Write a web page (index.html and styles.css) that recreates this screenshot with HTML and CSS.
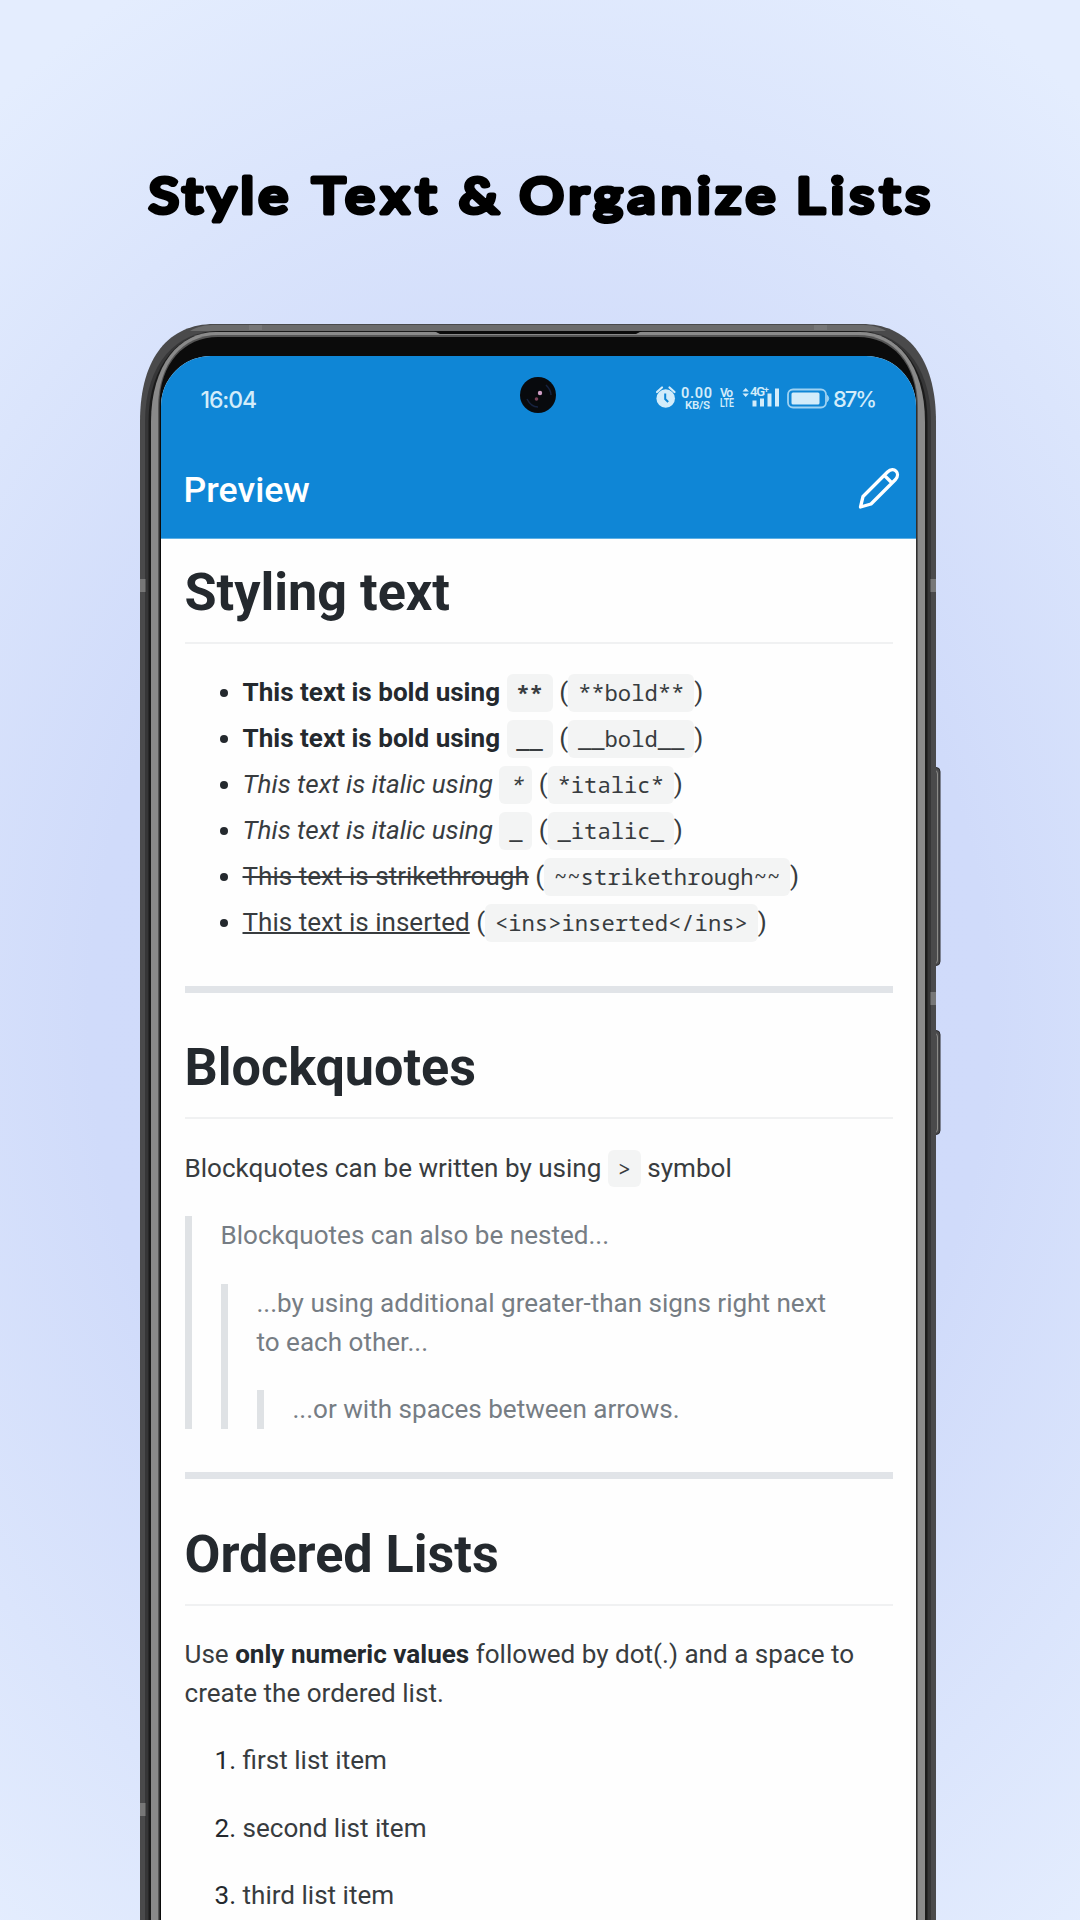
FILE: index.html
```html
<!DOCTYPE html>
<html lang="en">
<head>
<meta charset="utf-8">
<title>Style Text &amp; Organize Lists</title>
<link rel="stylesheet" href="styles.css">
</head>
<body>
<main class="poster">
  <svg class="headline" viewBox="0 0 1080 100" role="heading" aria-level="1">
    <g transform="scale(1.12 1)">
      <text x="133" y="61.500" textLength="124">Style</text>
      <text x="279" y="61.500" textLength="110">Text</text>
      <text x="410" y="61.500" textLength="34">&amp;</text>
      <text x="464" y="61.500" textLength="228">Organize</text>
      <text x="711" y="61.500" textLength="119">Lists</text>
    </g>
  </svg>

  <section class="phone">
    <svg class="frame" viewBox="0 0 808 1600" aria-hidden="true">
      <g fill="#4b4b4d" stroke="#2c2c2d">
        <rect x="788" y="443.500" width="12" height="198" rx="4"/>
        <rect x="788" y="706.500" width="12" height="104" rx="4"/>
      </g>
      <path fill="none" stroke="#8b8b88" d="M795 446q2.500 1 2.500 4v186q0 3-2.500 4M795 709q2.500 1 2.500 4v92q0 3-2.500 4"/>
      <path fill="#4a4a4b" d="M0 1600V98C0 32 30 0 74 0H722C766 0 796 32 796 98V1600Z"/>
      <path fill="#6b6b6b" d="M50 7C58 2 65 1 76 1H720C731 1 738 2 746 7Z"/>
      <path fill="#363637" d="M5 1600V98C5 38 38 7 78 7H718C758 7 791 38 791 98V1600Z"/>
      <path fill="#1b1b1b" d="M8.500 1600V98C8.500 40 40 7 80 7H716C756 7 787.500 40 787.500 98V1600Z"/>
      <path fill="#8a8a8a" d="M11 1600V98C11 40 40 8 76 8H720C756 8 785 40 785 98V1600Z"/>
      <path fill="#555" d="M18 1600V84C18 40 42 11 78 11H718C754 11 778 40 778 84V1600Z"/>
      <path fill="#0b0b0b" d="M19.500 1600V80C19.500 40 44 13 78 13H718C752 13 776.500 40 776.500 80V1600Z"/>
      <path fill="#0b0b0b" d="M294 7H502L496 10H300Z"/>
      <g fill="#777">
        <rect x="109" y="1" width="13" height="5"/><rect x="674" y="1" width="13" height="5"/>
        <rect x="0" y="255" width="5.500" height="13"/><rect x="790.500" y="255" width="5.500" height="13"/>
        <rect x="790.500" y="668" width="5.500" height="13"/><rect x="0" y="1479" width="5.500" height="13"/>
      </g>
    </svg>

    <div class="screen">
      <header class="appbar">
        <div class="status">
          <span class="clock">16:04</span>
          <svg class="indicators" viewBox="0 0 224 34">
            <g fill="none" stroke="#d3ecfa" stroke-width="2.200" stroke-linecap="round">
              <path d="M2 9l5-4.500M14.500 4.500l5 4.500"/>
            </g>
            <circle cx="10.700" cy="15.500" r="9.300" fill="#d3ecfa"/>
            <path d="M10.200 10.500v5.500l3 3" fill="none" stroke="#0f86d6" stroke-width="2"/>
            <g class="tiny">
              <text x="26" y="14.500" font-size="14.500" textLength="31">0.00</text>
              <text x="30" y="26.300" font-size="11.500" textLength="25">KB/S</text>
              <text x="65" y="13.500" font-size="12" textLength="13">Vo</text>
              <text x="65" y="24" font-size="12" textLength="14" lengthAdjust="spacingAndGlyphs">LTE</text>
              <text x="95" y="13" font-size="13" textLength="19">4G⁺</text>
            </g>
            <path d="M87.500 8.500l3.200-3.500L93.900 8.500zM87.500 10.500l3.200 3.500 3.200-3.500zM97.500 17.500h4v6h-4zM105 15.500h4v8h-4zM112.500 10.500h4v13h-4zM120 5.500h4v18h-4z" fill="#d3ecfa"/>
            <rect x="133" y="6.500" width="38" height="18" rx="5" fill="none" stroke="#9fd2f2" stroke-width="1.800"/>
            <rect x="136.500" y="9.500" width="28" height="12" rx="1.500" fill="#d3ecfa"/>
            <path d="M172.500 12.500q2.500 3 0 6z" fill="#9fd2f2" stroke="#9fd2f2"/>
            <text class="percent" x="178" y="23.500" textLength="44">87%</text>
          </svg>
        </div>
        <svg class="camera" viewBox="0 0 36 36">
          <circle cx="18" cy="18" r="18" fill="#080a0d"/>
          <path d="M7 22q4 8 11 8M26 8q5 5 5 10" fill="none" stroke="#17233f" stroke-width="1.500"/>
          <circle cx="20" cy="16" r="2.200" fill="#cf9fc4"/><circle cx="16.500" cy="22" r="1.800" fill="#7c4259"/>
        </svg>
        <div class="toolbar">
          <span class="title">Preview</span>
          <svg class="pencil" viewBox="0 0 42 42">
            <path d="M2.500 38L5 27.500 29.500 3C36-3 43 4 37.500 10.500L13 35ZM26.500 6.500l7.500 7.500" fill="none" stroke="#fff" stroke-width="3.300" stroke-linejoin="round"/>
          </svg>
        </div>
      </header>

      <article class="markdown">
        <h1>Styling text</h1>
        <ul>
          <li><strong>This text is bold using <code>**</code></strong> (<code>**bold**</code>)</li>
          <li><strong>This text is bold using <code class="light">__</code></strong> (<code>__bold__</code>)</li>
          <li><em>This text is italic using <code>*</code></em> (<code>*italic*</code>)</li>
          <li><em>This text is italic using <code class="upright">_</code></em> (<code>_italic_</code>)</li>
          <li><del>This text is strikethrough</del> (<code>~~strikethrough~~</code>)</li>
          <li><ins>This text is inserted</ins> (<code>&lt;ins&gt;inserted&lt;/ins&gt;</code>)</li>
        </ul>
        <hr>
        <h1>Blockquotes</h1>
        <p>Blockquotes can be written by using <code>&gt;</code> symbol</p>
        <blockquote>
          <p>Blockquotes can also be nested...</p>
          <blockquote>
            <p>...by using additional greater-than signs right next to each other...</p>
            <blockquote><p>...or with spaces between arrows.</p></blockquote>
          </blockquote>
        </blockquote>
        <hr>
        <h1>Ordered Lists</h1>
        <p>Use <strong>only numeric values</strong> followed by dot(.) and a space to create the ordered list.</p>
        <ol>
          <li>first list item</li>
          <li>second list item</li>
          <li>third list item</li>
        </ol>
      </article>
    </div>
  </section>
</main>
</body>
</html>
```
FILE: styles.css
```css
* { box-sizing: border-box; }
body { margin: 0; }
.poster {
  width: 1080px;
  height: 1920px;
  overflow: hidden;
  padding-top: 152px;
  background:
    radial-gradient(ellipse 900px 1150px at 50% 53%, #cfdafa 0%, #d0dbfa 50%, #dbe5fc 78%, #e4edfe 100%);
}
.headline {
  display: block;
  width: 1080px;
  height: 100px;
  font: 400 49px "Lato", sans-serif;
  fill: #000;
  stroke: #000;
  stroke-width: 5.200px;
  stroke-linejoin: round;
  stroke-linecap: round;
}
.phone {
  position: relative;
  width: 796px;
  margin: 71.500px 0 0 140px;
  padding: 32px 20px 0 20.500px;
}
.frame {
  position: absolute;
  left: 0;
  top: 0;
  width: 808px;
  height: 1600px;
}
.screen {
  position: relative;
  height: 1580px;
  overflow: hidden;
  background: #fefefe;
  border-radius: 50px 50px 0 0;
}
.appbar {
  height: 183.500px;
  background: #0f86d6;
  border-bottom: 1px solid #5eb0e4;
  color: #fff;
}
.status {
  display: flex;
  justify-content: space-between;
  align-items: center;
  height: 88px;
  padding: 0 37px 0 40px;
}
.clock {
  font: 450 23px "Inter", sans-serif;
  letter-spacing: -1.1px;
  color: #d3ecfa;
}
.indicators { width: 224px; height: 34px; font-family: "Roboto", sans-serif; fill: #d3ecfa; }
.tiny { font-weight: 600; }
.percent { font: 450 22px "Inter", sans-serif; }
.camera {
  position: absolute;
  left: 359.500px;
  top: 21.500px;
  width: 36px;
  height: 36px;
}
.toolbar {
  display: flex;
  justify-content: space-between;
  align-items: center;
  height: 92px;
  padding: 0 16px 0 23px;
}
.title { font: 500 35.700px "Roboto", sans-serif; }
.pencil { width: 42px; height: 42px; overflow: visible; }

.markdown {
  padding: 20px 23px 0 24px;
  font: 400 26.070px/39px "Roboto", sans-serif;
  color: #383c3f;
}
.markdown h1 {
  height: 85px;
  margin: 0 0 29.300px;
  border-bottom: 2px solid #f0f1f2;
  font: 700 52.140px/68px "Roboto", sans-serif;
  color: #24292e;
}
.markdown p { margin: 0 0 28.500px; }
.markdown ul, .markdown ol { margin: 0; padding-left: 58px; }
.markdown ul li { height: 46px; }
.markdown ol li { margin-bottom: 28.500px; }
.markdown li::marker { color: #24292e; }
.markdown strong { font-weight: 700; color: #24292e; }
.markdown hr {
  height: 7px;
  margin: 42.500px 0 42px;
  border: 0;
  background: #e1e4e8;
}
.markdown ul + hr { margin: 36.500px 0 41.500px; }
.markdown code {
  padding: 3px 9.800px 3.500px;
  border-radius: 6px;
  background: #f3f4f4;
  font: 400 22.200px/1 "Noto Sans Mono", "DejaVu Sans Mono", monospace;
  color: #383c3f;
}
.markdown strong code { font-weight: 700; }
.markdown strong code.light { font-weight: 500; }
.markdown em code { font-style: italic; }
.markdown em code.upright { font-style: normal; }
.markdown ins, .markdown del { text-decoration-thickness: 2px; }
.markdown blockquote {
  margin: 0;
  padding: 0 29px;
  border-left: 7px solid #dfe2e5;
  color: #767d84;
}
.markdown blockquote p { margin: 0; }
.markdown blockquote blockquote { margin-top: 28.500px; }
```
